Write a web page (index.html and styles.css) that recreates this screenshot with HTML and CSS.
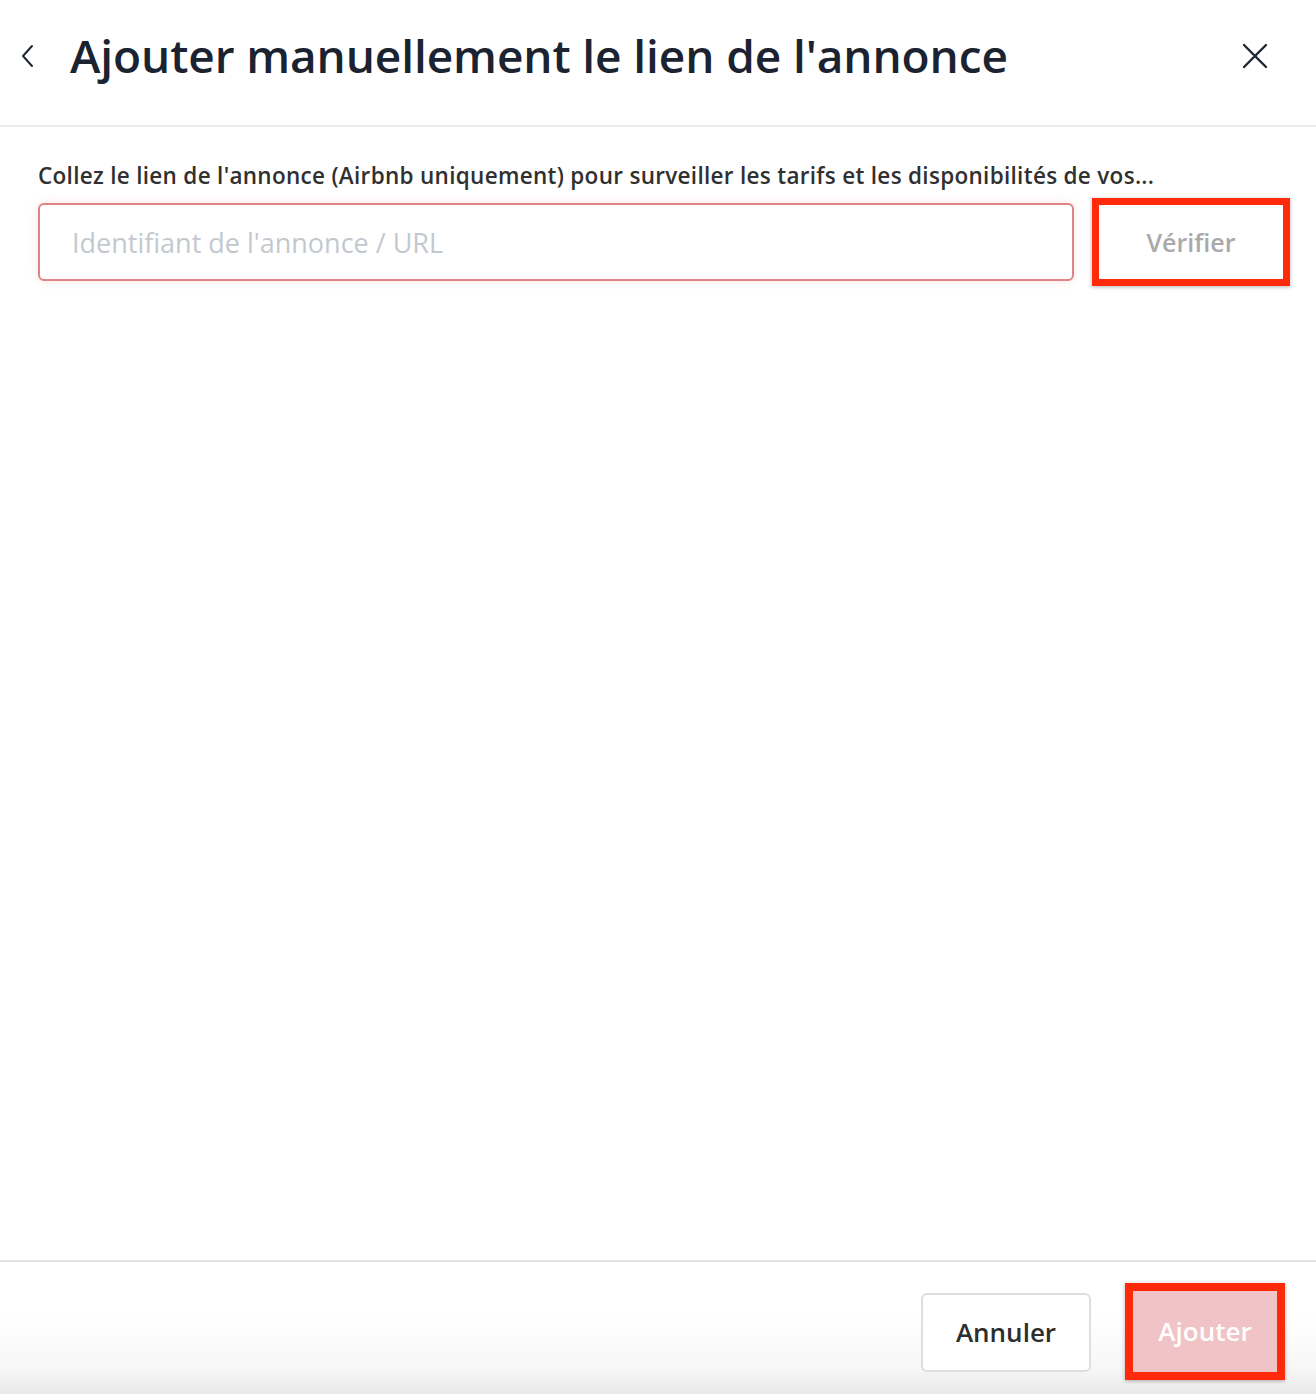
FILE: index.html
```html
<!DOCTYPE html>
<html lang="fr">
<head>
    <meta charset="UTF-8">
    <meta name="viewport" content="width=device-width, initial-scale=1.0">
    <title>Ajouter manuellement le lien de l'annonce</title>
    <link rel="stylesheet" href="styles.css">
</head>
<body>
    <div class="modal">
        <header class="modal-header">
            <button type="button" class="icon-button back-button" aria-label="Retour">
                <svg width="16" height="24" viewBox="0 0 16 24" fill="none" stroke="#1f2633" stroke-width="2" stroke-linecap="round" stroke-linejoin="round">
                    <polyline points="12,2 3,12 12,22"></polyline>
                </svg>
            </button>
            <h1 class="modal-title">Ajouter manuellement le lien de l'annonce</h1>
            <button type="button" class="icon-button close-button" aria-label="Fermer">
                <svg width="26" height="26" viewBox="0 0 26 26" fill="none" stroke="#1f2633" stroke-width="2.4" stroke-linecap="round">
                    <line x1="2" y1="2" x2="24" y2="24"></line>
                    <line x1="24" y1="2" x2="2" y2="24"></line>
                </svg>
            </button>
        </header>

        <main class="modal-body">
            <label for="listingUrl" class="field-label">Collez le lien de l'annonce (Airbnb uniquement) pour surveiller les tarifs et les disponibilités de vos...</label>
            <div class="field-row">
                <input type="text" id="listingUrl" class="url-input" placeholder="Identifiant de l'annonce / URL">
                <div class="highlight verify-highlight">
                    <button type="button" class="verify-button" disabled>Vérifier</button>
                </div>
            </div>
        </main>

        <footer class="modal-footer">
            <button type="button" class="cancel-button">Annuler</button>
            <div class="highlight add-highlight">
                <button type="button" class="add-button" disabled>Ajouter</button>
            </div>
        </footer>
    </div>
</body>
</html>
```

FILE: styles.css
```css
body {
    font-family: "Open Sans", "Noto Sans", Arial, sans-serif;
    background-color: #fff;
    color: #333;
    margin: 0;
    padding: 0;
}

.modal {
    height: 1394px;
    display: flex;
    flex-direction: column;
}

.modal-header {
    height: 127px;
    display: flex;
    align-items: center;
    border-bottom: 2px solid #eaecef;
    padding: 0 48px 0 20px;
    box-sizing: border-box;
}
.icon-button {
    background: none;
    border: none;
    padding: 0;
    cursor: pointer;
    display: flex;
    align-items: center;
}
.back-button {
    margin-right: 34px;
    margin-top: -14px;
}
.close-button {
    margin-left: auto;
    margin-top: -14px;
}
.modal-title {
    margin: 0 0 16px 0;
    font-size: 46px;
    font-weight: 600;
    color: #1b2230;
    letter-spacing: -0.1px;
}

.modal-body {
    flex: 1;
    padding: 33px 26px 0 38px;
}
.field-label {
    display: block;
    font-size: 22.5px;
    font-weight: 600;
    color: #303030;
    letter-spacing: 0.3px;
    margin-bottom: 7px;
}
.field-row {
    display: flex;
    align-items: center;
    gap: 18px;
}
.url-input {
    flex: 1;
    height: 78px;
    box-sizing: border-box;
    border: 2px solid #e08286;
    border-radius: 6px;
    padding: 0 32px;
    font-family: inherit;
    font-size: 27px;
    color: #333;
    box-shadow: 0 0 10px rgba(240, 120, 120, 0.2);
    outline: none;
}
.url-input::placeholder {
    color: #c3c8cf;
}

.highlight {
    border: 7px solid #ff2a0a;
    box-shadow: 0 1px 4px rgba(0, 0, 0, 0.3);
    display: flex;
}
.verify-highlight {
    width: 198px;
    height: 88px;
    box-sizing: border-box;
}
.verify-button {
    flex: 1;
    background: #fff;
    border: none;
    font-family: inherit;
    font-size: 25px;
    font-weight: 600;
    color: #a9a9a9;
    cursor: not-allowed;
    padding-bottom: 2px;
}

.modal-footer {
    height: 134px;
    border-top: 2px solid #e3e3e3;
    display: flex;
    align-items: center;
    justify-content: flex-end;
    gap: 34px;
    padding: 0 31px 0 0;
    box-sizing: border-box;
    background: linear-gradient(to bottom, #fff 0%, #fff 40%, #f7f7f7 80%, #e9e9e9 100%);
}
.cancel-button {
    width: 170px;
    height: 79px;
    background: #fff;
    border: 2px solid #dedede;
    border-radius: 6px;
    font-family: inherit;
    font-size: 26px;
    font-weight: 600;
    color: #2e2e2e;
    cursor: pointer;
    margin-top: 8px;
}
.add-highlight {
    width: 160px;
    height: 97px;
    box-sizing: border-box;
    border-width: 8px;
    margin-top: 6px;
}
.add-button {
    flex: 1;
    background: #f0c3c7;
    border: none;
    font-family: inherit;
    font-size: 26px;
    font-weight: 600;
    color: #fff;
    cursor: not-allowed;
}
```
